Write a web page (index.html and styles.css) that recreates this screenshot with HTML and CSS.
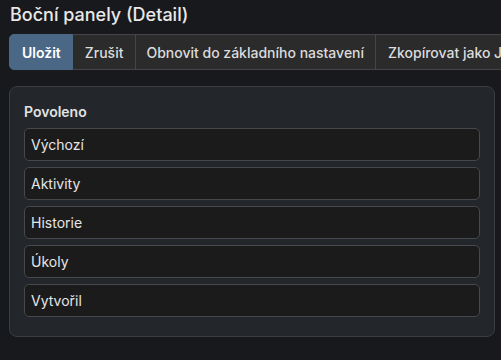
FILE: index.html
```html
<!DOCTYPE html>
<html lang="cs">
<head>
<meta charset="utf-8">
<link rel="stylesheet" href="styles.css">
</head>
<body>
<div class="page">
  <h1 class="title">Boční panely (Detail)</h1>
  <div class="btn-group">
    <button class="btn btn-primary">Uložit</button>
    <button class="btn">Zrušit</button>
    <button class="btn btn-wide">Obnovit do základního nastavení</button>
    <button class="btn">Zkopírovat jako JSON</button>
  </div>
  <div class="panel">
    <div class="label">Povoleno</div>
    <div class="list">
      <div class="item">Výchozí</div>
      <div class="item">Aktivity</div>
      <div class="item">Historie</div>
      <div class="item">Úkoly</div>
      <div class="item">Vytvořil</div>
    </div>
  </div>
</div>
</body>
</html>
```
FILE: styles.css
```css
html, body {
  margin: 0;
  padding: 0;
  background: #18191d;
  overflow: hidden;
}
body {
  font-family: Inter, "Noto Sans", sans-serif;
  color: #e4e4e4;
}
.page {
  padding: 2px 6px 0 9px;
  overflow: hidden;
}
.title {
  margin: 0 0 0 1px;
  font-size: 18px;
  font-weight: 500;
  line-height: 26px;
  color: #e8e8e8;
}
.btn-group {
  display: flex;
  margin-top: 6px;
  white-space: nowrap;
}
.btn {
  flex: none;
  font-family: inherit;
  font-size: 14px;
  font-weight: 500;
  color: #dcdcdc;
  background: #2b2b2c;
  border: 1px solid #444548;
  border-left: none;
  height: 36px;
  padding: 0 12px;
  margin: 0;
}
.btn-wide {
  padding: 0 11px 0 10px;
}
.btn-primary {
  background: #4a6886;
  border-color: #4a6886;
  border-radius: 5px 0 0 5px;
  color: #fff;
  font-weight: 600;
  padding: 0 11px 0 12px;
  border-left: 1px solid #4a6886;
}
.panel {
  margin-top: 16px;
  width: 486px;
  box-sizing: border-box;
  background: #23262b;
  border: 1px solid #393c41;
  border-radius: 8px;
  padding: 15px 14px 19px 14px;
}
.label {
  font-size: 14px;
  font-weight: 600;
  color: #e2e2e2;
  line-height: 20px;
  margin-bottom: 6px;
}
.list {
  display: flex;
  flex-direction: column;
  gap: 6px;
}
.item {
  height: 33px;
  box-sizing: border-box;
  border: 1px solid #47484c;
  border-radius: 5px;
  background: #1b1b1c;
  display: flex;
  align-items: center;
  padding: 0 6px;
  font-size: 14px;
  color: #e6e6e6;
}
```
